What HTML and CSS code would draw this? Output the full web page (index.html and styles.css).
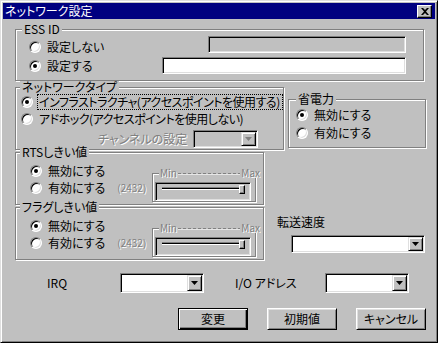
FILE: index.html
```html
<!DOCTYPE html>
<html lang="ja">
<head>
    <meta charset="UTF-8">
    <meta name="viewport" content="width=device-width, initial-scale=1.0">
    <title>ネットワーク設定</title>
    <link rel="stylesheet" href="styles.css">
</head>
<body>
<div class="window">
    <div class="titlebar">
        <span class="title">ネットワーク設定</span>
        <button class="close">
            <svg width="8" height="7" viewBox="0 0 8 7"><path d="M0 0h2l2 2 2-2h2L5 3.5 8 7H6L4 5 2 7H0l3-3.5z"/></svg>
        </button>
    </div>

    <div class="client">
        <div class="group ess">
            <span class="legend">ESS ID</span>
            <div class="ess-row first">
                <div class="opt"><span class="radio"></span><span class="text">設定しない</span></div>
                <div class="field off w198"></div>
            </div>
            <div class="ess-row">
                <div class="opt"><span class="radio on"></span><span class="text">設定する</span></div>
                <div class="field w244"></div>
            </div>
        </div>

        <div class="band top-band">
            <div class="group nettype">
                <span class="legend">ネットワークタイプ</span>
                <div class="opt"><span class="radio on"></span><span class="text tight focus">インフラストラクチャ(アクセスポイントを使用する)</span></div>
                <div class="opt gap1"><span class="radio"></span><span class="text tight">アドホック(アクセスポイントを使用しない)</span></div>
                <div class="channel">
                    <span class="channel-label dim">チャンネルの設定</span>
                    <div class="combo off channel-combo"><span class="arrow"></span></div>
                </div>
            </div>
            <div class="group power">
                <span class="legend">省電力</span>
                <div class="opt"><span class="radio on"></span><span class="text">無効にする</span></div>
                <div class="opt gap2"><span class="radio"></span><span class="text">有効にする</span></div>
            </div>
        </div>

        <div class="band mid-band">
            <div class="left-col">
                <div class="group threshold">
                    <span class="legend">RTSしきい値</span>
                    <div class="options">
                        <div class="opt"><span class="radio on"></span><span class="text">無効にする</span></div>
                        <div class="opt gap1"><span class="radio"></span><span class="text">有効にする</span><span class="value dim">(2432)</span></div>
                    </div>
                    <div class="slider">
                        <div class="scale dim"><span>Min</span><span class="dash"></span><span>Max</span></div>
                        <div class="trackbar"><span class="track"></span><span class="thumb"></span></div>
                    </div>
                </div>
                <div class="group threshold">
                    <span class="legend">フラグしきい値</span>
                    <div class="options">
                        <div class="opt"><span class="radio on"></span><span class="text">無効にする</span></div>
                        <div class="opt gap1"><span class="radio"></span><span class="text">有効にする</span><span class="value dim">(2432)</span></div>
                    </div>
                    <div class="slider">
                        <div class="scale dim"><span>Min</span><span class="dash"></span><span>Max</span></div>
                        <div class="trackbar"><span class="track"></span><span class="thumb"></span></div>
                    </div>
                </div>
            </div>
            <div class="right-col">
                <div class="speed-label">転送速度</div>
                <div class="combo speed"><span class="arrow"></span></div>
            </div>
        </div>

        <div class="ports">
            <span class="port-label irq">IRQ</span>
            <div class="combo port"><span class="arrow"></span></div>
            <span class="port-label io">I/O アドレス</span>
            <div class="combo port"><span class="arrow"></span></div>
        </div>

        <div class="actions">
            <button class="btn default">変更</button>
            <button class="btn">初期値</button>
            <button class="btn">キャンセル</button>
        </div>
    </div>
</div>
</body>
</html>
```

FILE: styles.css
```css
body {
    margin: 0;
    background: #c0c0c0;
    font-family: "Noto Sans CJK JP", sans-serif;
    font-size: 12px;
    line-height: 14px;
    font-feature-settings: "palt";
    color: #000;
}
button { font: inherit; color: inherit; padding: 0; }

/* window frame */
.window {
    width: 438px;
    height: 343px;
    box-sizing: border-box;
    padding: 2px;
    background: #c0c0c0;
    border: 1px solid;
    border-color: #dfdfdf #000 #000 #dfdfdf;
    box-shadow: inset 1px 1px #fff, inset -1px -1px #808080;
}
.titlebar {
    height: 16px;
    background: #000080;
    display: flex;
    align-items: flex-start;
    justify-content: space-between;
    padding-left: 2px;
}
.title { color: #fff; line-height: 16px; }
.close {
    width: 15px;
    height: 13px;
    margin: 2px 3px 0 0;
    box-sizing: border-box;
    background: #c0c0c0;
    border: 1px solid;
    border-color: #fff #000 #000 #fff;
    box-shadow: inset -1px -1px #808080;
    display: flex;
    align-items: center;
    justify-content: center;
}
.close svg { display: block; }

.client { padding: 10px 0 0 12px; }

/* group boxes */
.group {
    position: relative;
    box-sizing: border-box;
    border: 1px solid #808080;
    box-shadow: 1px 1px 0 #fff, inset 1px 1px 0 #fff;
}
.legend {
    position: absolute;
    top: -7px;
    left: 4px;
    padding: 0 2px;
    line-height: 12px;
    background: #c0c0c0;
    white-space: nowrap;
}

/* radio options */
.opt { display: flex; align-items: center; gap: 4px; }
.gap1 { margin-top: 1px; }
.gap2 { margin-top: 2px; }
.radio {
    flex: none;
    width: 12px;
    height: 12px;
    box-sizing: border-box;
    border-radius: 50%;
    border: 1px solid;
    border-color: #808080 #fff #fff #808080;
    box-shadow: inset 1px 1px #000, inset -1px -1px #dfdfdf;
    background: #fff;
    display: flex;
    align-items: center;
    justify-content: center;
}
.radio.on::after {
    content: "";
    width: 4px;
    height: 4px;
    border-radius: 50%;
    background: #000;
}
.text {
    border: 1px solid transparent;
    padding: 0 1px;
    white-space: nowrap;
}
.text.tight { letter-spacing: -0.5px; }
.text.focus {
    border: 1px dotted #000;
    width: 242px;
    overflow: hidden;
}
.dim { color: #808080; text-shadow: 1px 1px 0 #fff; }

/* sunken controls */
.field, .combo, .trackbar {
    box-sizing: border-box;
    border: 1px solid;
    border-color: #808080 #fff #fff #808080;
    box-shadow: inset 1px 1px #000, inset -1px -1px #dfdfdf;
    background: #fff;
}
.field { height: 17px; }
.field.off, .combo.off { background: #c0c0c0; }
.w198 { width: 198px; }
.w244 { width: 244px; }

.combo {
    display: flex;
    justify-content: flex-end;
    padding: 1px;
}
.arrow {
    width: 15px;
    box-sizing: border-box;
    background: #c0c0c0;
    border: 1px solid;
    border-color: #dfdfdf #000 #000 #dfdfdf;
    box-shadow: inset 1px 1px #fff, inset -1px -1px #808080;
    display: flex;
    align-items: center;
    justify-content: center;
}
.arrow::before {
    content: "";
    width: 7px;
    height: 4px;
    background: #000;
    clip-path: polygon(0 0, 100% 0, 50% 100%);
}
.combo.off .arrow::before { background: #808080; }

/* ESS ID */
.ess {
    width: 409px;
    height: 52px;
    padding: 6px 17px 0 13px;
}
.ess .legend { left: 6px; }
.ess-row {
    display: flex;
    align-items: center;
    justify-content: space-between;
    height: 17px;
}
.ess-row + .ess-row { margin-top: 4px; }
.ess-row.first .opt { margin-top: 4px; }

.band { display: flex; align-items: flex-start; }
.top-band { margin-top: 6px; }
.mid-band { margin-top: 2px; }

/* network type */
.nettype {
    width: 269px;
    height: 63px;
    padding: 6px 0 0 5px;
}
.channel {
    display: flex;
    align-items: center;
    margin: 3px 0 0 77px;
}
.channel-label { width: 95px; white-space: nowrap; }
.channel-combo { width: 65px; height: 18px; }

/* power saving */
.power {
    width: 138px;
    height: 49px;
    margin: 12px 0 0 4px;
    padding: 7px 0 0 7px;
}
.power .legend { left: 7px; }

/* thresholds */
.left-col { width: 249px; }
.threshold {
    width: 249px;
    height: 53px;
    display: flex;
    padding: 10px 7px 0 14px;
}
.threshold + .threshold { margin-top: 2px; }
.options { flex: 1; }
.value { font-size: 10px; margin-left: 6px; }

.slider {
    position: relative;
    width: 104px;
    height: 29px;
    margin-top: 10px;
    box-sizing: border-box;
    padding: 8px 0 0 2px;
    border: 1px solid #808080;
    box-shadow: 1px 1px 0 #fff, inset 1px 1px 0 #fff;
}
.scale {
    position: absolute;
    top: -7px;
    left: 6px;
    width: 102px;
    padding: 0 1px;
    box-sizing: border-box;
    display: flex;
    align-items: center;
    font-size: 10px;
    line-height: 11px;
    background: #c0c0c0;
}
.dash {
    flex: 1;
    height: 1px;
    margin: 1px 1px 0;
    background: repeating-linear-gradient(90deg, #808080 0 3px, transparent 3px 5px);
    box-shadow: 0 1px 0 rgba(255,255,255,0.6);
}
.trackbar {
    position: relative;
    width: 96px;
    height: 19px;
    background: #c0c0c0;
}
.track {
    display: block;
    margin: 4px 0 0 6px;
    width: 81px;
    height: 3px;
    box-sizing: border-box;
    border-top: 1px solid #808080;
    border-bottom: 1px solid #fff;
    background: #000;
}
.thumb {
    position: absolute;
    left: 83px;
    top: 2px;
    width: 6px;
    height: 9px;
    box-sizing: border-box;
    background: #c0c0c0;
    border: 1px solid;
    border-color: #fff #000 #000 #fff;
    box-shadow: inset -1px -1px #808080;
}

/* transfer speed */
.speed-label { margin: 62px 0 0 13px; line-height: 15px; }
.speed { width: 134px; height: 18px; margin: 6px 0 0 27px; }

/* ports */
.ports {
    display: flex;
    align-items: center;
    height: 20px;
    margin-top: 13px;
    padding-left: 32px;
}
.port-label { white-space: nowrap; }
.irq { width: 73px; }
.io { width: 90px; margin-left: 31px; }
.port { width: 84px; height: 20px; }

/* buttons */
.actions {
    display: flex;
    gap: 19px;
    margin-top: 15px;
    padding-left: 163px;
}
.btn {
    width: 70px;
    height: 22px;
    box-sizing: border-box;
    background: #c0c0c0;
    border: 1px solid;
    border-color: #fff #000 #000 #fff;
    box-shadow: inset 1px 1px #dfdfdf, inset -1px -1px #808080;
}
.btn.default {
    border-color: #000;
    box-shadow: inset 1px 1px #fff, inset -1px -1px #000, inset -2px -2px #808080;
}
```
